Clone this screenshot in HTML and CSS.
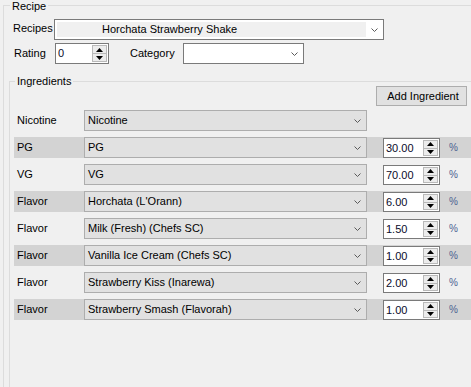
FILE: index.html
```html
<!DOCTYPE html>
<html>
<head>
<meta charset="utf-8">
<title>Recipe</title>
<link rel="stylesheet" href="styles.css">
</head>
<body>
<div class="group outer">
  <div class="legend">Recipe</div>
  <div class="row-recipes">
    <span class="lbl lbl-recipes">Recipes</span>
    <div class="combo-edit recipes-combo">
      <span class="edit-area">Horchata Strawberry Shake</span>
      <span class="drop-btn"><svg width="7" height="4" viewBox="0 0 7 4"><polyline points="0.5,0.5 3.5,3.5 6.5,0.5" fill="none" stroke="#5a5a5a" stroke-width="1"/></svg></span>
    </div>
  </div>
  <div class="row-rating">
    <span class="lbl lbl-rating">Rating</span>
    <div class="spin rating-spin">
      <span class="spin-val">0</span>
      <span class="spin-btns">
        <span class="sb"><svg width="7" height="4" viewBox="0 0 7 4"><polygon points="0,4 3.5,0 7,4" fill="#000"/></svg></span>
        <span class="sb sb-down"><svg width="7" height="4" viewBox="0 0 7 4"><polygon points="0,0 7,0 3.5,4" fill="#000"/></svg></span>
      </span>
    </div>
    <span class="lbl lbl-category">Category</span>
    <div class="combo-edit category-combo">
      <span class="edit-area white"></span>
      <span class="drop-btn"><svg width="7" height="4" viewBox="0 0 7 4"><polyline points="0.5,0.5 3.5,3.5 6.5,0.5" fill="none" stroke="#5a5a5a" stroke-width="1"/></svg></span>
    </div>
  </div>

  <div class="group inner">
    <div class="legend legend-inner">Ingredients</div>
    <div class="add-row"><button class="btn-add">Add Ingredient</button></div>
    <div class="ing-list">
      <div class="ing">
        <span class="ing-lbl">Nicotine</span>
        <div class="ing-combo"><span class="ing-text">Nicotine</span><span class="drop-btn"><svg width="7" height="4" viewBox="0 0 7 4"><polyline points="0.5,0.5 3.5,3.5 6.5,0.5" fill="none" stroke="#5a5a5a" stroke-width="1"/></svg></span></div>
      </div>
      <div class="ing shade">
        <span class="ing-lbl">PG</span>
        <div class="ing-combo"><span class="ing-text">PG</span><span class="drop-btn"><svg width="7" height="4" viewBox="0 0 7 4"><polyline points="0.5,0.5 3.5,3.5 6.5,0.5" fill="none" stroke="#5a5a5a" stroke-width="1"/></svg></span></div>
        <div class="spin ing-spin"><span class="spin-val">30.00</span><span class="spin-btns"><span class="sb"><svg width="7" height="4" viewBox="0 0 7 4"><polygon points="0,4 3.5,0 7,4" fill="#000"/></svg></span><span class="sb sb-down"><svg width="7" height="4" viewBox="0 0 7 4"><polygon points="0,0 7,0 3.5,4" fill="#000"/></svg></span></span></div>
        <span class="pct">%</span>
      </div>
      <div class="ing">
        <span class="ing-lbl">VG</span>
        <div class="ing-combo"><span class="ing-text">VG</span><span class="drop-btn"><svg width="7" height="4" viewBox="0 0 7 4"><polyline points="0.5,0.5 3.5,3.5 6.5,0.5" fill="none" stroke="#5a5a5a" stroke-width="1"/></svg></span></div>
        <div class="spin ing-spin"><span class="spin-val">70.00</span><span class="spin-btns"><span class="sb"><svg width="7" height="4" viewBox="0 0 7 4"><polygon points="0,4 3.5,0 7,4" fill="#000"/></svg></span><span class="sb sb-down"><svg width="7" height="4" viewBox="0 0 7 4"><polygon points="0,0 7,0 3.5,4" fill="#000"/></svg></span></span></div>
        <span class="pct">%</span>
      </div>
      <div class="ing shade">
        <span class="ing-lbl">Flavor</span>
        <div class="ing-combo"><span class="ing-text">Horchata (L'Orann)</span><span class="drop-btn"><svg width="7" height="4" viewBox="0 0 7 4"><polyline points="0.5,0.5 3.5,3.5 6.5,0.5" fill="none" stroke="#5a5a5a" stroke-width="1"/></svg></span></div>
        <div class="spin ing-spin"><span class="spin-val">6.00</span><span class="spin-btns"><span class="sb"><svg width="7" height="4" viewBox="0 0 7 4"><polygon points="0,4 3.5,0 7,4" fill="#000"/></svg></span><span class="sb sb-down"><svg width="7" height="4" viewBox="0 0 7 4"><polygon points="0,0 7,0 3.5,4" fill="#000"/></svg></span></span></div>
        <span class="pct">%</span>
      </div>
      <div class="ing">
        <span class="ing-lbl">Flavor</span>
        <div class="ing-combo"><span class="ing-text">Milk (Fresh) (Chefs SC)</span><span class="drop-btn"><svg width="7" height="4" viewBox="0 0 7 4"><polyline points="0.5,0.5 3.5,3.5 6.5,0.5" fill="none" stroke="#5a5a5a" stroke-width="1"/></svg></span></div>
        <div class="spin ing-spin"><span class="spin-val">1.50</span><span class="spin-btns"><span class="sb"><svg width="7" height="4" viewBox="0 0 7 4"><polygon points="0,4 3.5,0 7,4" fill="#000"/></svg></span><span class="sb sb-down"><svg width="7" height="4" viewBox="0 0 7 4"><polygon points="0,0 7,0 3.5,4" fill="#000"/></svg></span></span></div>
        <span class="pct">%</span>
      </div>
      <div class="ing shade">
        <span class="ing-lbl">Flavor</span>
        <div class="ing-combo"><span class="ing-text">Vanilla Ice Cream (Chefs SC)</span><span class="drop-btn"><svg width="7" height="4" viewBox="0 0 7 4"><polyline points="0.5,0.5 3.5,3.5 6.5,0.5" fill="none" stroke="#5a5a5a" stroke-width="1"/></svg></span></div>
        <div class="spin ing-spin"><span class="spin-val">1.00</span><span class="spin-btns"><span class="sb"><svg width="7" height="4" viewBox="0 0 7 4"><polygon points="0,4 3.5,0 7,4" fill="#000"/></svg></span><span class="sb sb-down"><svg width="7" height="4" viewBox="0 0 7 4"><polygon points="0,0 7,0 3.5,4" fill="#000"/></svg></span></span></div>
        <span class="pct">%</span>
      </div>
      <div class="ing">
        <span class="ing-lbl">Flavor</span>
        <div class="ing-combo"><span class="ing-text">Strawberry Kiss (Inarewa)</span><span class="drop-btn"><svg width="7" height="4" viewBox="0 0 7 4"><polyline points="0.5,0.5 3.5,3.5 6.5,0.5" fill="none" stroke="#5a5a5a" stroke-width="1"/></svg></span></div>
        <div class="spin ing-spin"><span class="spin-val">2.00</span><span class="spin-btns"><span class="sb"><svg width="7" height="4" viewBox="0 0 7 4"><polygon points="0,4 3.5,0 7,4" fill="#000"/></svg></span><span class="sb sb-down"><svg width="7" height="4" viewBox="0 0 7 4"><polygon points="0,0 7,0 3.5,4" fill="#000"/></svg></span></span></div>
        <span class="pct">%</span>
      </div>
      <div class="ing shade">
        <span class="ing-lbl">Flavor</span>
        <div class="ing-combo"><span class="ing-text">Strawberry Smash (Flavorah)</span><span class="drop-btn"><svg width="7" height="4" viewBox="0 0 7 4"><polyline points="0.5,0.5 3.5,3.5 6.5,0.5" fill="none" stroke="#5a5a5a" stroke-width="1"/></svg></span></div>
        <div class="spin ing-spin"><span class="spin-val">1.00</span><span class="spin-btns"><span class="sb"><svg width="7" height="4" viewBox="0 0 7 4"><polygon points="0,4 3.5,0 7,4" fill="#000"/></svg></span><span class="sb sb-down"><svg width="7" height="4" viewBox="0 0 7 4"><polygon points="0,0 7,0 3.5,4" fill="#000"/></svg></span></span></div>
        <span class="pct">%</span>
      </div>
    </div>
  </div>
</div>
</body>
</html>
```

FILE: styles.css
```css
html, body {
  margin: 0;
  padding: 0;
  overflow: hidden;
}
body {
  width: 471px;
  height: 387px;
  background: #f0f0f0;
  font-family: "Liberation Sans", Arial, sans-serif;
  font-size: 11px;
  color: #000;
}
.group {
  border: 1px solid #dcdcdc;
  border-right: none;
  border-bottom: none;
  box-sizing: border-box;
}
.outer {
  margin: 5px 0 0 3px;
  width: 468px;
  height: 382px;
}
.legend {
  line-height: 13px;
  height: 13px;
  background: #f0f0f0;
  padding: 0 2px;
  width: max-content;
  margin: -6px 0 0 6px;
}
.lbl {
  line-height: 13px;
  white-space: nowrap;
}
.row-recipes {
  display: flex;
  margin-top: 6px;
  height: 21px;
}
.lbl-recipes {
  margin: 3px 0 0 9px;
  width: 41px;
}
.combo-edit {
  box-sizing: border-box;
  height: 21px;
  border: 1px solid #7a7a7a;
  background: #fff;
  display: flex;
  padding: 2px 0 2px 2px;
}
.recipes-combo {
  width: 330px;
}
.edit-area {
  flex: 1;
  background: #f0f0f0;
  line-height: 15px;
  padding-left: 45px;
  white-space: nowrap;
}
.edit-area.white {
  background: #fff;
}
.drop-btn {
  width: 17px;
  flex: none;
  display: flex;
  align-items: center;
  justify-content: center;
}
.row-rating {
  display: flex;
  align-items: center;
  margin-top: 3px;
  height: 21px;
}
.lbl-rating {
  margin-left: 10px;
  width: 41px;
}
.lbl-category {
  margin-left: 21px;
  width: 53px;
}
.category-combo {
  width: 121px;
}
.spin {
  box-sizing: border-box;
  border: 1px solid #7a7a7a;
  background: #fff;
  display: flex;
  padding: 1px;
}
.rating-spin {
  width: 54px;
  height: 21px;
}
.spin-val {
  flex: 1;
  padding-left: 1px;
  line-height: 17px;
  color: #0a0a2a;
}
.spin-btns {
  width: 15px;
  display: flex;
  flex-direction: column;
}
.sb {
  flex: 1;
  box-sizing: border-box;
  border: 1px solid #b9b9b9;
  background: #ececec;
  display: flex;
  align-items: center;
  justify-content: center;
}
.sb-down {
  border-top: none;
}
.inner {
  margin: 17px 0 0 5px;
  width: 462px;
  height: 306px;
}
.legend-inner {
  margin: -7px 0 0 5px;
}
.add-row {
  margin-top: -2px;
  display: flex;
}
.btn-add {
  margin-left: 366px;
  width: 91px;
  height: 20px;
  box-sizing: border-box;
  border: 1px solid #adadad;
  background: #e1e1e1;
  font-family: "Liberation Sans", Arial, sans-serif;
  font-size: 11px;
  color: #000;
  padding: 0 0 0 3px;
  line-height: 18px;
}
.ing-list {
  margin-top: 4px;
  display: flex;
  flex-direction: column;
  gap: 6px;
}
.ing {
  display: flex;
  align-items: center;
  height: 21px;
  margin-left: 4px;
}
.ing.shade {
  background: #d3d3d3;
}
.ing-lbl {
  width: 67px;
  padding-left: 3px;
  line-height: 13px;
}
.ing-combo {
  box-sizing: border-box;
  width: 283px;
  height: 21px;
  border: 1px solid #adadad;
  background: #e1e1e1;
  display: flex;
  align-items: center;
}
.ing-text {
  flex: 1;
  padding-left: 3px;
  line-height: 13px;
  white-space: nowrap;
}
.ing-spin {
  margin-left: 16px;
  width: 57px;
  height: 20px;
  align-self: flex-end;
}
.ing-spin .spin-val {
  line-height: 16px;
}
.pct {
  margin-left: 9px;
  font-size: 10px;
  line-height: 13px;
  color: #4a5f90;
}
```
